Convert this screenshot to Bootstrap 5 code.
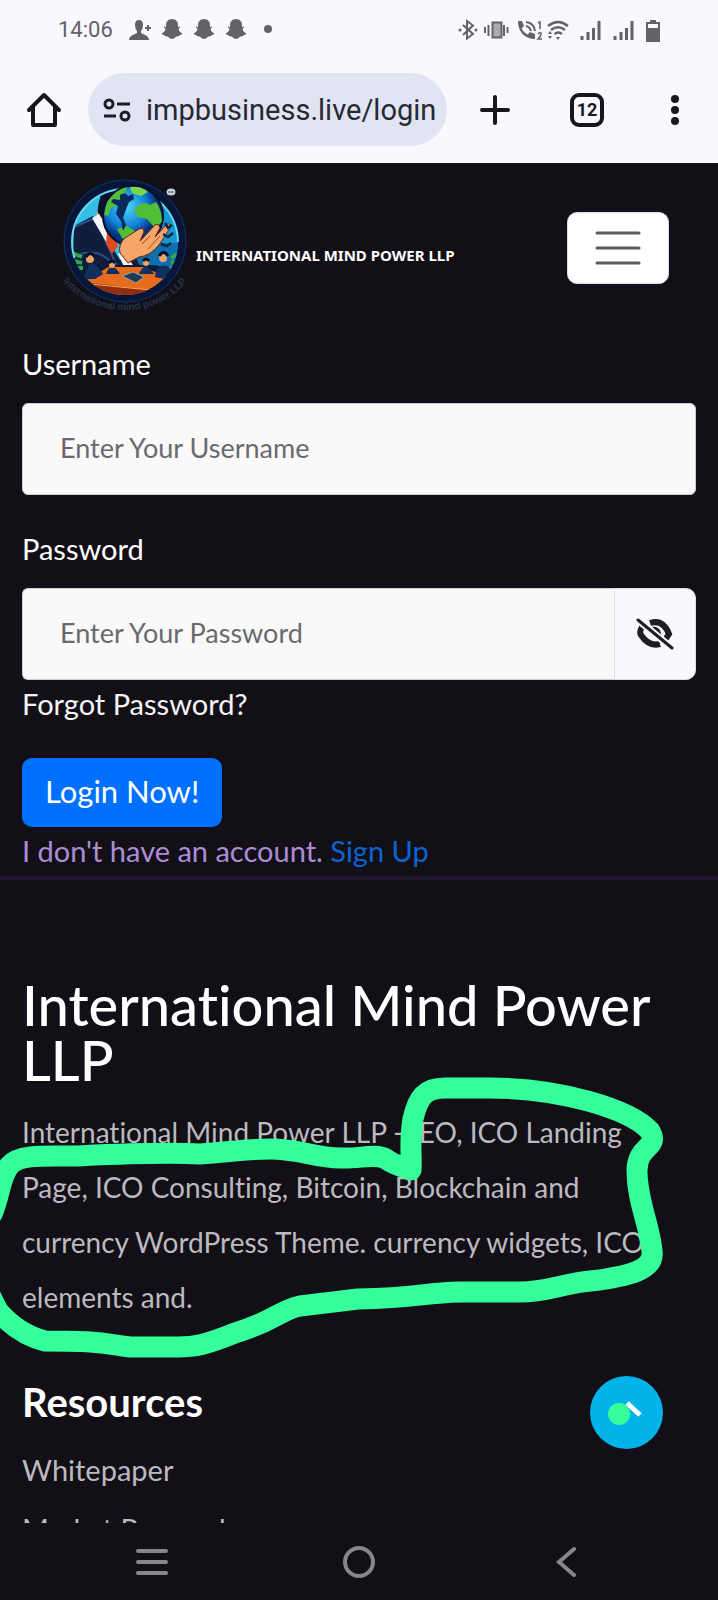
<!DOCTYPE html>
<html lang="en">
<head>
<meta charset="utf-8">
<meta name="viewport" content="width=device-width, initial-scale=1">
<title>International Mind Power LLP - Login</title>
<link href="https://cdn.jsdelivr.net/npm/bootstrap@5.3.0/dist/css/bootstrap.min.css" rel="stylesheet">
<style>
  body { background: #121016; color: #fff; font-family: Lato, "Noto Sans", sans-serif; font-size: 29px; line-height: 40px; font-variant-ligatures: none; }
  svg { display: block; flex: none; }
  .phone-top { background: #f9f8fe; color: #17181d; font-family: Roboto, sans-serif; }
  .status-row { height: 60px; padding: 0 56px 0 58px; color: #626267; }
  .clock { font-size: 22px; line-height: 24px; }
  .toolbar { height: 103px; padding: 0 38px 4px 24px; }
  .toolbar button, .system-nav button, .to-top { background: none; border: 0; padding: 0; color: inherit; }
  .address { background: #e1e4f3; border-radius: 37px; height: 73px; padding: 0 6px 0 14px; margin: 0 33px 0 24px; }
  .address input { background: none; border: 0; outline: 0; color: #272933; font-size: 29px; width: 0; padding: 0; margin-left: 14px; }
  .tab-count { width: 34px; height: 34px; border: 4px solid currentColor !important; border-radius: 9px; font-size: 18px; line-height: 24px; font-weight: 700; margin: 0 66px 0 60px; }
  .site-head { padding: 14px 49px 31px 60px; }
  .brand-name { font-family: "Noto Sans", sans-serif; font-size: 15px; line-height: 24px; font-weight: 700; color: #fff; margin: 20px 0 0 6px; }
  .toggler { width: 102px; height: 72px; background: #fff; border: 1px solid #d9d9dc; border-radius: 10px; margin-top: 6px; color: #5a5d5c; }
  .page-pad { padding-left: 22px; padding-right: 22px; }
  .field { height: 92px; background: #f9f9f9; border: 1px solid #cfcdd3; border-radius: 6px; padding: 0 37px 4px; font-size: 27px; color: #333; }
  .field::placeholder { color: #6a6a6e; opacity: 1; }
  .field-label { margin-bottom: 19px; }
  .field-group { margin-bottom: 34px; }
  .eye { width: 82px; background: #f8f9fc; border: 1px solid #dee0e6; border-radius: 10px; color: #1d1f24; }
  .login-btn { background: #0070ff; border: 0; border-radius: 10px; height: 69px; padding: 0 23px 4px; font-size: 31px; color: #fff; margin: 34px 0 4px; }
  .light-link { color: #f4f4f6; text-decoration: none; }
  .signup-note { color: #ab8dd6; margin-bottom: 5px; }
  .signup-note a { color: #0c63d2; text-decoration: none; }
  .site-foot { border-top: 4px solid #1e142b; padding-top: 97px; }
  .foot-title { font-size: 56px; line-height: 55px; font-weight: 500; margin-bottom: 18px; }
  .foot-text { font-size: 28px; line-height: 55px; color: #bbbabf; margin-bottom: 55px; white-space: nowrap; }
  .foot-sub { font-size: 40px; line-height: 44px; font-weight: 700; margin-bottom: 18px; }
  .foot-links a { color: #bbbabf; text-decoration: none; line-height: 55px; }
  .foot-links li { margin-bottom: 4px; }
  .foot-links li, .foot-links a { display: block; }
  .marker { top: 181px; left: 0; width: 100%; pointer-events: none; }
  .to-top { right: 55px; bottom: 74px; width: 73px; height: 73px; }
  .system-nav { height: 77px; padding: 0 48px; color: #87868b; background: #121016; }
</style>
</head>
<body>
<div class="d-flex flex-column vh-100 overflow-hidden">
  <header class="phone-top flex-shrink-0">
    <div class="status-row d-flex align-items-center justify-content-between">
      <div class="d-flex align-items-center gap-3">
        <span class="clock">14:06</span>
        <svg width="145" height="22" viewBox="0 0 145 22" fill="currentColor" aria-hidden="true">
          <path d="M0 21q0-4 6-6l2-1V12q-2-2-2-6 0-5 4-5t4 5q0 4-2 6v2l2 1q6 2 6 6zM16 8h2V6h2v2h2v2h-2v2h-2v-2h-2z"/>
          <defs><path id="ghost" d="M10 0c4 0 6 3 6 6v2l2-.4q1 1-1.600 2.200c.6 2 1.800 3.600 3.600 4.400q.5 1.400-2.600 2l-.6 1.200q-2-.3-3.200.6Q12 20 10 20t-3.600-2q-1.200-.9-3.200-.6l-.6-1.200Q-.5 15.600 0 14.200c1.800-.8 3-2.400 3.600-4.400Q1 8.600 2 7.600L4 8V6c0-3 2-6 6-6"/></defs>
          <use href="#ghost" x="33"/><use href="#ghost" x="65"/><use href="#ghost" x="97"/>
          <circle cx="139" cy="10" r="4"/>
        </svg>
      </div>
      <svg width="204" height="26" viewBox="0 0 204 26" fill="none" stroke="currentColor" stroke-width="2" aria-hidden="true">
        <path d="M5 8l10 9-6 4.500V4l6 4.500L5 18" /><g fill="currentColor" stroke="none"><circle cx="2" cy="13" r="1.500"/><circle cx="18" cy="13" r="1.500"/></g>
        <path d="M27 10v6M30.500 8v11M46 8v11M49.500 10v6"/><rect x="34.500" y="5.500" width="9" height="15" fill="#aaaaaf"/>
        <path d="M60 4h4l2 5-2.500 2.500q2 4 6 6L72 15l5 2v5C67 22 60 15 60 4z" fill="currentColor" stroke="none"/><path d="M68 9q4 1 5 5M68 5q8 1 9 9"/>
        <path d="M80 6l2-1v7M80 17q3-3 3 0 0 2-3 5h4" stroke-width="1.600"/>
        <path d="M90 9q10-8 20 0M93 13q7-5.500 14 0M96.500 17q4-3 7.500 0" stroke-width="2.500"/><path d="M98 20h4l-2 3zM90 17l2-3 2 3zM90 19h4l-2 3z" fill="currentColor" stroke="none"/>
        <g stroke-width="3"><path id="bars" d="M124 19v4M130 15v8M135.500 11v12M141 4v19"/><use href="#bars" x="33"/></g>
        <path d="M188 5h4V3h6v2h4v20h-14z" fill="currentColor" stroke="none"/><path d="M190 7h10v4h-10z" fill="#f9f8fe" stroke="none"/>
      </svg>
    </div>
    <div class="toolbar d-flex align-items-center">
      <button type="button" aria-label="Home"><svg width="40" height="40" viewBox="0 0 40 40" fill="none" stroke="currentColor" stroke-width="4" stroke-linejoin="round" stroke-linecap="round"><path d="M5 20L20 5l15 15M9 17v18h22V17"/></svg></button>
      <div class="address d-flex align-items-center flex-grow-1">
        <svg width="30" height="26" viewBox="0 0 30 26" fill="none" stroke="#1b1d26" stroke-width="3" aria-hidden="true"><circle cx="7" cy="7" r="4"/><path d="M15 7h13M2 19h12"/><circle cx="23" cy="19" r="4"/></svg>
        <input class="flex-grow-1" type="text" aria-label="Address" value="impbusiness.live/login">
      </div>
      <button type="button" aria-label="New tab"><svg width="30" height="30" viewBox="0 0 30 30" stroke="currentColor" stroke-width="4" stroke-linecap="round"><path d="M15 2v26M2 15h26"/></svg></button>
      <button type="button" class="tab-count d-flex align-items-center justify-content-center" aria-label="Open tabs">12</button>
      <button type="button" aria-label="More"><svg width="10" height="32" viewBox="0 0 10 32" fill="currentColor"><circle cx="5" cy="5" r="4"/><circle cx="5" cy="16" r="4"/><circle cx="5" cy="27" r="4"/></svg></button>
    </div>
  </header>

  <main class="flex-grow-1 overflow-hidden position-relative">
    <nav class="site-head d-flex align-items-center justify-content-between">
      <a href="#" class="d-flex align-items-center text-decoration-none">
        <svg width="130" height="136" viewBox="0 0 130 136" role="img" aria-label="International Mind Power logo">
          <defs>
            <clipPath id="disc"><circle cx="65" cy="65" r="53"/></clipPath>
            <radialGradient id="earth" cx=".4" cy=".35"><stop offset="0" stop-color="#4fd6f5"/><stop offset=".65" stop-color="#1183dc"/><stop offset="1" stop-color="#06307c"/></radialGradient>
            <path id="arc" d="M1 102A81 81 0 0 0 129 102"/>
          </defs>
          <circle cx="65" cy="64" r="62" fill="#071638"/>
          <circle cx="65" cy="64" r="61" fill="none" stroke="#12345e"/>
          <circle cx="65" cy="65" r="53" fill="#1796cf"/>
          <g clip-path="url(#disc)">
            <path d="M12 20h50v70H12z" fill="#35bde8"/><path d="M76 66h44v34H76z" fill="#0e6eae"/>
            <path d="M38 50q-3-26 8-40Q58 2 74 6L58 60z" fill="#0a1230"/><path d="M37 34q-3 12 3 20l6-4z" fill="#f0a468"/>
            <path d="M14 49l19-10 27 44 14-6 8 16-36 18-34-8z" fill="#101d3d"/>
            <path d="M14 50l21-9 22 48M20 77q18-5 30 7" fill="none" stroke="#2a4f87" stroke-width="2"/>
            <path d="M32 41l7-4 16 24-7 7z" fill="#f2f5fa"/><path d="M47 54l8 1 3 14-6 8-6-10z" fill="#e04a20"/>
            <path d="M58 77l6-4 10 17-8 4z" fill="#eef4fb"/>
            <path d="M10 98q18-13 30-10h50q15 0 30 10v25H10z" fill="#081b38"/>
            <path d="M24 105l24-15h36l27 12-22 18H40z" fill="#e56b1d"/><path d="M24 105l66 8-4 7-44-1z" fill="#8f2e11"/><path d="M30 107l60 6 18-11" fill="none" stroke="#ffa54a"/>
            <path d="M62 99l11-4 11 5-8 6z" fill="#233a50" stroke="#8ea4b5"/>
            <g fill="#112f5c"><path d="M23 102l6-15q8-2 14 10l-8 5zM46 97q5-14 14 0zM79 97q6-15 15 0zM96 93q9-9 15 0l-2 10-14-3z"/></g>
            <g fill="#f0a468"><circle cx="30" cy="82" r="4"/><circle cx="52" cy="88" r="3"/><circle cx="86" cy="86" r="3"/><circle cx="103" cy="81" r="4"/></g>
            <path d="M26 80q4-7 9 0M99 79q5-7 9 0M83 84q3-4 6 0M49 86q3-4 6 0" stroke="#071026" stroke-width="3" fill="none"/>
            <path d="M12 76l10 4m-8 4l8 2m-6 5l7 0M119 76l-8 5m9 3l-9 2m7 5l-8 0" stroke="#37a648" stroke-width="4"/>
          </g>
          <circle cx="65" cy="65" r="53" fill="none" stroke="#62d8f2" stroke-width="2" stroke-dasharray="0 150 110 20 70"/>
          <circle cx="73" cy="39" r="30" fill="url(#earth)" stroke="#061027" stroke-width="2"/>
          <path d="M47 25q9-13 20-15l-3 9-5 9-8 3-3 8-4-1zM78 28q8-4 12 0l6-3q6 8 6 20l-7 6-8-9-9-2-4-6zM57 52l10-3 8 5-6 11-7-4z" fill="#52be36"/><path d="M70 10q12-1 18 5l-7 4-9-3z" fill="#7bd64a"/>
          <path d="M60 18q6-4 8 1l5-2 1 5-5 3-4 10-2 6 3 7-3 6-2-10-5-7 2-8-7-4 2-3 7 1z" fill="#0a2a5f"/>
          <path d="M60 76q-2-9 5-15l14-9q5-2 5 3l-4 9 15-16q4-2 5 3l-5 9 12-13q4-1 3 4L99 68q-9 11-20 12l-11 6z" fill="#f5a66a" stroke="#63260f"/>
          <path d="M82 67l8-8M88 72l12-13" stroke="#a24b20" fill="none"/>
          <path d="M105 46l3 5 4-3M103 57l5 3 5-4M101 67l6 2 4-3" stroke="#08264c" stroke-width="2.500" fill="none"/>
          <ellipse cx="111" cy="15" rx="4.500" ry="3.500" fill="#c6cfda"/><path d="M108 15h6" stroke="#4a5564"/>
          <text font-family="Liberation Sans, sans-serif" font-size="10" font-weight="700" fill="#25304a"><textPath href="#arc" startOffset="3">International mind power LLP</textPath></text>
        </svg>
        <span class="brand-name">INTERNATIONAL MIND POWER LLP</span>
      </a>
      <button type="button" class="toggler d-flex align-items-center justify-content-center" aria-label="Menu">
        <svg width="46" height="34" viewBox="0 0 46 34" stroke="currentColor" stroke-width="3" stroke-linecap="round"><path d="M2 2h42M2 17h42M2 32h42"/></svg>
      </button>
    </nav>

    <form class="page-pad" onsubmit="return false">
      <div class="field-group">
        <label class="field-label d-block" for="user">Username</label>
        <input class="field w-100 d-block" id="user" type="text" placeholder="Enter Your Username">
      </div>
      <label class="field-label d-block" for="pass">Password</label>
      <div class="input-group flex-nowrap">
        <input class="field flex-grow-1 rounded-end-0 border-end-0" id="pass" type="password" placeholder="Enter Your Password">
        <button type="button" class="eye rounded-start-0 d-flex align-items-center justify-content-center" aria-label="Show password">
          <svg width="38" height="32" viewBox="0 0 38 32" fill="none" stroke="currentColor" stroke-width="6"><path d="M6 9Q3 14 5 17q8 12 19 9M14 5q13-4 19 11l-4 6"/><path d="M14 11q9-3 10 7" stroke-width="3"/><path d="M18 10q6 0 5 7z" fill="currentColor" stroke="none"/><path d="M2 2l34 28" stroke="#f8f9fc" stroke-width="7"/><path d="M2 2l34 28" stroke-width="3" stroke-linecap="round"/></svg>
        </button>
      </div>
      <a href="#" class="light-link d-block mt-1">Forgot Password?</a>
      <button type="submit" class="login-btn d-block">Login Now!</button>
      <p class="signup-note">I don't have an account. <a href="#">Sign Up</a></p>
    </form>

    <footer class="site-foot page-pad position-relative">
      <h2 class="foot-title">International Mind Power LLP</h2>
      <p class="foot-text">International Mind Power LLP - IEO, ICO Landing<br>Page, ICO Consulting, Bitcoin, Blockchain and<br>currency WordPress Theme. currency widgets, ICO<br>elements and.</p>
      <h3 class="foot-sub">Resources</h3>
      <ul class="foot-links list-unstyled mb-0">
        <li><a href="#">Whitepaper</a></li>
        <li><a href="#">Market Research</a></li>
      </ul>
      <svg class="marker position-absolute" viewBox="0 1060 718 310" fill="none" stroke="#34ff9b" stroke-width="21" stroke-linecap="round" stroke-linejoin="round" aria-hidden="true">
        <path d="M-8 1213C0 1195 0 1175 10 1164C20 1153 45 1155 75 1155C120 1153 160 1151 200 1153C230 1151 245 1148 270 1148C300 1148 315 1157 340 1157C360 1158 375 1152 386 1158C395 1165 400 1164 411 1169C412 1155 409 1140 413 1118C418 1096 425 1087 445 1087H490C560 1087 630 1108 650 1130C660 1148 637 1143 637 1170C637 1200 650 1225 652 1250C655 1270 625 1275 600 1279C560 1282 550 1291 520 1291H460C420 1292 420 1297 358 1298L300 1305C280 1309 275 1320 235 1332C205 1344 195 1346 178 1346H130C100 1342 100 1340 45 1340C20 1334 5 1318-2 1310L-12 1290"/>
      </svg>
    </footer>

    <button type="button" class="to-top position-absolute" aria-label="Back to top">
      <svg width="73" height="73" viewBox="0 0 73 73"><circle cx="36.500" cy="36.500" r="36.500" fill="#02b3ea"/><path d="M37 27l13 12" stroke="#fff" stroke-width="5"/><circle cx="29" cy="38" r="11" fill="#34ff9b"/></svg>
    </button>
  </main>

  <nav class="system-nav flex-shrink-0 d-flex align-items-center" aria-label="System">
    <div class="row g-0 w-100 align-items-center">
      <button type="button" aria-label="Recent apps" class="col"><svg class="mx-auto" width="32" height="28" viewBox="0 0 32 28" stroke="currentColor" stroke-width="4" stroke-linecap="round"><path d="M2 3h28M2 14h28M2 25h28"/></svg></button>
      <button type="button" aria-label="Home screen" class="col"><svg class="mx-auto" width="32" height="32" viewBox="0 0 32 32" fill="none" stroke="currentColor" stroke-width="4"><circle cx="16" cy="16" r="14"/></svg></button>
      <button type="button" aria-label="Back" class="col"><svg class="mx-auto" width="22" height="30" viewBox="0 0 22 30" fill="none" stroke="currentColor" stroke-width="4" stroke-linecap="round"><path d="M19 2L4 15l15 13"/></svg></button>
    </div>
  </nav>
</div>
<script src="https://cdn.jsdelivr.net/npm/bootstrap@5.3.0/dist/js/bootstrap.bundle.min.js"></script>
</body>
</html>
